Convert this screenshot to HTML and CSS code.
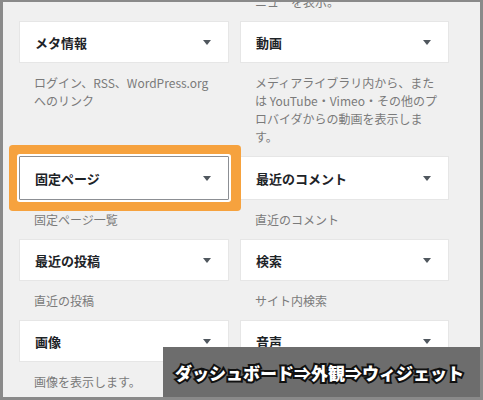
FILE: index.html
```html
<!DOCTYPE html>
<html lang="ja">
  <head>
    <meta charset="UTF-8" />
    <meta name="viewport" content="width=device-width, initial-scale=1.0" />
    <title>ウィジェット</title>
    <link rel="stylesheet" href="styles.css">
  </head>
  <body>
    <div class="screen">
      <div class="widgets">
        <div class="widget widget-tail">
          <p class="widget-desc">ニューを表示。</p>
        </div>

        <div class="widget">
          <div class="widget-top"><span>メタ情報</span><i class="arrow"></i></div>
          <p class="widget-desc">ログイン、RSS、WordPress.org<br />へのリンク</p>
        </div>
        <div class="widget">
          <div class="widget-top"><span>動画</span><i class="arrow"></i></div>
          <p class="widget-desc">
            メディアライブラリ内から、また<br />は YouTube・Vimeo・その他のプ<br />ロバイダからの動画を表示しま<br />す。
          </p>
        </div>

        <div class="widget">
          <div class="widget-top tall focused"><span>固定ページ</span><i class="arrow"></i></div>
          <p class="widget-desc">固定ページ一覧</p>
        </div>
        <div class="widget">
          <div class="widget-top tall"><span>最近のコメント</span><i class="arrow"></i></div>
          <p class="widget-desc">直近のコメント</p>
        </div>

        <div class="widget">
          <div class="widget-top"><span>最近の投稿</span><i class="arrow"></i></div>
          <p class="widget-desc">直近の投稿</p>
        </div>
        <div class="widget">
          <div class="widget-top"><span>検索</span><i class="arrow"></i></div>
          <p class="widget-desc">サイト内検索</p>
        </div>

        <div class="widget">
          <div class="widget-top"><span>画像</span><i class="arrow"></i></div>
          <p class="widget-desc">画像を表示します。</p>
        </div>
        <div class="widget">
          <div class="widget-top"><span>音声</span><i class="arrow"></i></div>
          <p class="widget-desc">音声プレーヤーを表示します。</p>
        </div>
      </div>

      <div class="caption">ダッシュボード⇒外観⇒ウィジェット</div>
    </div>
  </body>
</html>
```

FILE: styles.css
```css
body {
  margin: 0;
  width: 483px;
  height: 400px;
  overflow: hidden;
  font-family: "Noto Sans CJK JP", "Noto Sans", sans-serif;
  background: #8a8a8a;
}

.screen {
  position: relative;
  box-sizing: border-box;
  width: 483px;
  height: 400px;
  border: 3px solid #8a8a8a;
  border-top-width: 2px;
  background: #f0f0f0;
  overflow: hidden;
}

.widgets {
  display: grid;
  grid-template-columns: 210px 209px;
  column-gap: 11px;
  row-gap: 10px;
  padding-left: 16px;
  align-items: start;
}

.widget-tail {
  grid-column: 2;
  margin-top: -9px;
}

.widget-top {
  display: flex;
  align-items: center;
  justify-content: space-between;
  box-sizing: border-box;
  height: 42px;
  padding: 0 17px 0 15px;
  background: #fff;
  border: 1px solid #e6e6e6;
  font-size: 13px;
  font-weight: 700;
  color: #1d2327;
}

.widget-top.tall {
  height: 44px;
}

.widget-top.focused {
  position: relative;
  z-index: 1;
  border-color: #8c8f94;
  border-radius: 1px;
  box-shadow: 0 0 0 2px #fff, 1px 0 0 11px #f6a23e;
}

.arrow {
  width: 0;
  height: 0;
  border-left: 4px solid transparent;
  border-right: 4px solid transparent;
  border-top: 5px solid #50575e;
}

.widget-desc {
  margin: 11px 0 0;
  padding: 0 12px 0 15px;
  font-size: 12px;
  line-height: 18px;
  color: #7a7a7a;
}

.widget-tail .widget-desc {
  margin: 0;
}

.caption {
  position: absolute;
  left: 160px;
  top: 345px;
  right: -3px;
  bottom: -3px;
  display: flex;
  align-items: center;
  padding-left: 12px;
  padding-bottom: 3px;
  background: #6d6d6d;
  font-size: 17px;
  font-weight: 900;
  color: #fff;
  -webkit-text-stroke: 4px #111;
  paint-order: stroke fill;
  letter-spacing: 0;
}
```
